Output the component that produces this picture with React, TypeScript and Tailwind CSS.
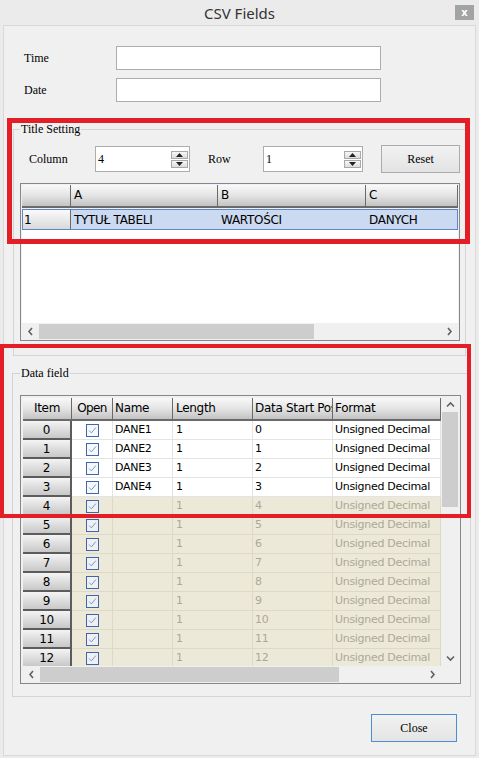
import React from 'react';

const serif = "[font-family:'Liberation_Serif','Times_New_Roman',serif] text-[12px] text-black";
const grid = "[font-family:'DejaVu_Sans','Verdana',sans-serif] text-[11px] tracking-[-0.3px]";
const hdrCell = "bg-linear-to-b from-[#f9f9f9] via-[#e4e4e4] to-[#c3c3c3] border-r border-b-2 border-[#6a6a6a]";

const Chevron = ({ dir }: { dir: 'l' | 'r' | 'u' | 'd' }) => {
  const pts = {
    l: '5,1 2,4.5 5,8',
    r: '2,1 5,4.5 2,8',
    u: '1,5.5 4.5,2 8,5.5',
    d: '1,2.5 4.5,6 8,2.5',
  }[dir];
  const vb = dir === 'l' || dir === 'r' ? '0 0 7 9' : '0 0 9 8';
  const w = dir === 'l' || dir === 'r' ? 7 : 9;
  const h = dir === 'l' || dir === 'r' ? 9 : 8;
  return (
    <svg width={w} height={h} viewBox={vb}>
      <polyline points={pts} fill="none" stroke="#606060" strokeWidth="1.6" />
    </svg>
  );
};

const Check = ({ on }: { on: boolean }) => (
  <svg width="13" height="13" viewBox="0 0 13 13">
    <rect x="0.5" y="0.5" width="12" height="12" fill={on ? '#f5f8fd' : '#eef0f3'} stroke="#4065ab" />
    <path d="M3.2 6.6 L5.4 8.9 L9.8 3.6" fill="none" stroke="#7d96c4" strokeWidth="1" />
  </svg>
);

const SpinBox = ({ value, className }: { value: string; className: string }) => (
  <div className={`flex h-[26px] items-center justify-between border border-[#abadb3] bg-white pl-[2px] pr-[1px] ${className}`}>
    <span className={serif}>{value}</span>
    <div className="flex flex-col gap-[1px]">
      <div className="flex h-[8px] w-[17px] items-center justify-center border border-[#a8a8a8] bg-linear-to-b from-[#f7f7f7] to-[#dcdcdc]">
        <svg width="7" height="4" viewBox="0 0 7 4"><polygon points="0,4 3.5,0 7,4" fill="#222" /></svg>
      </div>
      <div className="flex h-[8px] w-[17px] items-center justify-center border border-[#a8a8a8] bg-linear-to-b from-[#f7f7f7] to-[#dcdcdc]">
        <svg width="7" height="4" viewBox="0 0 7 4"><polygon points="0,0 3.5,4 7,0" fill="#222" /></svg>
      </div>
    </div>
  </div>
);

const rows = Array.from({ length: 13 }, (_, i) => i);

export default function App() {
  return (
    <div className="relative h-[758px] w-[479px] overflow-hidden bg-[#ebebeb]">
      {/* title bar */}
      <div className="flex h-[25px] items-center">
        <div className="w-[24px]" />
        <div className="flex-1 text-center [font-family:'Noto_Sans','Open_Sans',sans-serif] text-[15px] leading-[20px] text-[#333]">
          CSV Fields
        </div>
        <div className="mr-[5px] flex h-[15px] w-[19px] items-center justify-center bg-[#a3a3a3] [font-family:'DejaVu_Sans',sans-serif] text-[10px] font-bold leading-none text-white">
          x
        </div>
      </div>

      {/* client */}
      <div className="ml-[3px] h-[731px] w-[473px] border border-[#d9d9d9] bg-[#f0f0f0]">
        <div className="mt-[20px] flex items-center pl-[20px]">
          <span className={`w-[92px] ${serif}`}>Time</span>
          <div className="h-[24px] w-[265px] border border-[#abadb3] bg-white" />
        </div>
        <div className="mt-[8px] flex items-center pl-[20px]">
          <span className={`w-[92px] ${serif}`}>Date</span>
          <div className="h-[24px] w-[265px] border border-[#abadb3] bg-white" />
        </div>

        {/* Title Setting */}
        <fieldset className="ml-[9px] mt-[20px] h-[234px] w-[453px] border border-[#d4d4d4] pb-[14px]">
          <legend className={`ml-[6px] px-[1px] leading-[14px] ${serif}`}>Title Setting</legend>
          <div className="mt-[9px] flex items-center pl-[15px]">
            <span className={`w-[66px] ${serif}`}>Column</span>
            <SpinBox value="4" className="w-[95px]" />
            <span className={`ml-[18px] w-[55px] ${serif}`}>Row</span>
            <SpinBox value="1" className="w-[100px]" />
            <div className={`ml-[18px] flex h-[28px] w-[79px] items-center justify-center border border-[#acacac] bg-linear-to-b from-[#f2f2f2] to-[#e3e3e3] ${serif}`}>
              Reset
            </div>
          </div>

          <div className={`ml-[6px] mt-[10px] flex h-[158px] w-[440px] flex-col border border-[#828790] p-[1px] ${grid} text-[12px] tracking-[-0.1px]`}>
            <div className="flex h-[23px] shrink-0 leading-[21px]">
              <div className={`w-[49px] ${hdrCell}`} />
              <div className={`w-[147px] pl-[3px] ${hdrCell}`}>A</div>
              <div className={`w-[148px] pl-[3px] ${hdrCell}`}>B</div>
              <div className={`w-[92px] pl-[3px] ${hdrCell}`}>C</div>
            </div>
            <div className="mt-[1px] flex h-[21px] shrink-0 border border-[#5f86c4] bg-[#cbdaf1]">
              <div className="flex w-[48px] items-center border-r border-[#6a6a6a] bg-linear-to-b from-[#fafafa] to-[#d9d9d9] pl-[1px]">1</div>
              <div className="flex w-[147px] items-center pl-[3px]">TYTUŁ TABELI</div>
              <div className="flex w-[148px] items-center pl-[3px]">WARTOŚCI</div>
              <div className="flex flex-1 items-center pl-[3px]">DANYCH</div>
            </div>
            <div className="flex-1 bg-white" />
            <div className="flex h-[16px] shrink-0 items-center bg-[#f0f0f0]">
              <div className="flex w-[17px] justify-center"><Chevron dir="l" /></div>
              <div className="h-[15px] w-[275px] bg-[#cdcdcd]" />
              <div className="flex-1" />
              <div className="flex w-[17px] justify-center"><Chevron dir="r" /></div>
            </div>
          </div>
        </fieldset>

        {/* Data field */}
        <fieldset className="ml-[8px] mt-[10px] h-[331px] w-[459px] border border-[#d4d4d4]">
          <legend className={`ml-[7px] px-[1px] leading-[14px] ${serif}`}>Data field</legend>
          <div className={`ml-[7px] mt-[15px] flex h-[289px] w-[441px] border border-[#828790] pb-[1px] pl-[2px] pr-[1px] pt-[2px] ${grid}`}>
            <div className="flex w-[418px] flex-col">
              <div className="flex h-[23px] shrink-0 text-[12px] leading-[21px]">
                <div className={`w-[49px] text-center ${hdrCell}`}>Item</div>
                <div className={`w-[41px] overflow-hidden whitespace-nowrap text-center tracking-[-0.6px] ${hdrCell}`}>Open</div>
                <div className={`w-[60px] pl-[2px] ${hdrCell}`}>Name</div>
                <div className={`w-[80px] pl-[3px] ${hdrCell}`}>Length</div>
                <div className={`w-[80px] overflow-hidden whitespace-nowrap pl-[2px] ${hdrCell}`}>Data Start Pos</div>
                <div className={`w-[108px] pl-[2px] ${hdrCell}`}>Format</div>
              </div>
              <div className="h-[245px] shrink-0 overflow-hidden">
                {rows.map((i) => {
                  const on = i < 4;
                  const cell = on ? 'border-r border-b border-[#e3e3e3]' : 'border-r border-b border-[#dcd9c8]';
                  return (
                    <div key={i} className={`flex h-[19px] ${on ? 'bg-white text-black' : 'bg-[#ece9d8] text-[#aca899]'}`}>
                      <div className="flex w-[49px] items-center justify-center border-r-2 border-b-2 border-[#5c5c5c] bg-linear-to-b from-[#f4f4f4] to-[#c8c8c8] text-[12px] text-black">
                        {i}
                      </div>
                      <div className={`flex w-[41px] items-center justify-center ${cell}`}>
                        <Check on={on} />
                      </div>
                      <div className={`flex w-[60px] items-center pl-[2px] ${cell}`}>{on ? `DANE${i + 1}` : ''}</div>
                      <div className={`flex w-[80px] items-center pl-[3px] ${cell}`}>1</div>
                      <div className={`flex w-[80px] items-center pl-[2px] ${cell}`}>{i}</div>
                      <div className={`flex w-[108px] items-center whitespace-nowrap pl-[2px] ${cell}`}>Unsigned Decimal</div>
                    </div>
                  );
                })}
              </div>
              <div className="flex h-[16px] shrink-0 items-center bg-[#f0f0f0]">
                <div className="flex w-[17px] justify-center"><Chevron dir="l" /></div>
                <div className="h-[15px] w-[299px] bg-[#cdcdcd]" />
                <div className="flex-1" />
                <div className="flex w-[17px] justify-center"><Chevron dir="r" /></div>
              </div>
            </div>
            <div className="flex w-[18px] flex-col bg-[#f0f0f0]">
              <div className="flex h-[14px] items-center justify-center"><Chevron dir="u" /></div>
              <div className="mx-[1px] h-[95px] bg-[#cdcdcd]" />
              <div className="flex-1" />
              <div className="flex h-[16px] items-center justify-center"><Chevron dir="d" /></div>
              <div className="h-[16px]" />
            </div>
          </div>
        </fieldset>

        <div className="mr-[18px] mt-[17px] flex justify-end">
          <div className={`flex h-[28px] w-[86px] items-center justify-center border border-[#4a8fd6] bg-linear-to-b from-[#f2f2f2] to-[#e4e4e4] ${serif}`}>
            Close
          </div>
        </div>
      </div>

      {/* red annotation frames */}
      <div className="pointer-events-none absolute left-[7px] top-[118px] h-[126px] w-[463px] border-[5px] border-[#e31e26]" />
      <div className="pointer-events-none absolute left-0 top-[344px] h-[174px] w-[471px] border-[4px] border-[#e31e26]" />
    </div>
  );
}
